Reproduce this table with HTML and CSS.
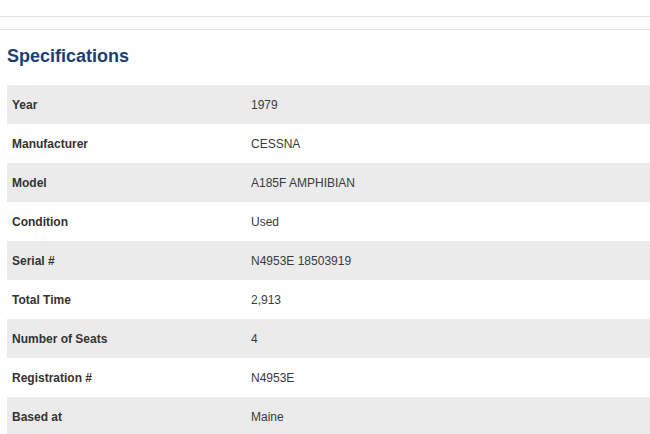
FILE: index.html
```html
<!DOCTYPE html>
<html>
<head>
<meta charset="utf-8">
<link rel="stylesheet" href="styles.css">
</head>
<body>
<div class="topbar"></div>
<div class="topbar2"></div>
<section class="specs">
  <h2 class="specs-title">Specifications</h2>
  <div class="spec-list">
    <div class="spec-row alt"><div class="spec-label">Year</div><div class="spec-value">1979</div></div>
    <div class="spec-row"><div class="spec-label">Manufacturer</div><div class="spec-value">CESSNA</div></div>
    <div class="spec-row alt"><div class="spec-label">Model</div><div class="spec-value">A185F AMPHIBIAN</div></div>
    <div class="spec-row"><div class="spec-label">Condition</div><div class="spec-value">Used</div></div>
    <div class="spec-row alt"><div class="spec-label">Serial #</div><div class="spec-value">N4953E 18503919</div></div>
    <div class="spec-row"><div class="spec-label">Total Time</div><div class="spec-value">2,913</div></div>
    <div class="spec-row alt"><div class="spec-label">Number of Seats</div><div class="spec-value">4</div></div>
    <div class="spec-row"><div class="spec-label">Registration #</div><div class="spec-value">N4953E</div></div>
    <div class="spec-row alt"><div class="spec-label">Based at</div><div class="spec-value">Maine</div></div>
  </div>
</section>
</body>
</html>
```

FILE: styles.css
```css
html, body {
  margin: 0;
  padding: 0;
  background: #fff;
  font-family: "Liberation Sans", Arial, sans-serif;
  overflow: hidden;
}
.topbar {
  height: 16px;
  border-bottom: 1px solid #e6e6e6;
}
.topbar2 {
  height: 12px;
  background: #fdfdfd;
  border-bottom: 1px solid #e3e3e3;
}
.specs {
  padding: 16px 0 0 7px;
}
.specs-title {
  margin: 0 0 18px 0;
  font-size: 18px;
  line-height: 21px;
  font-weight: bold;
  color: #1c3f72;
}
.spec-list {
  display: flex;
  flex-direction: column;
}
.spec-row {
  display: flex;
  align-items: center;
  height: 39px;
  font-size: 12px;
  color: #333;
}
.spec-row.alt {
  background: #ebebeb;
}
.spec-label {
  width: 239px;
  padding-left: 5px;
  font-weight: bold;
}
.spec-value {
  flex: 1;
  color: #3a3a3a;
}
```
